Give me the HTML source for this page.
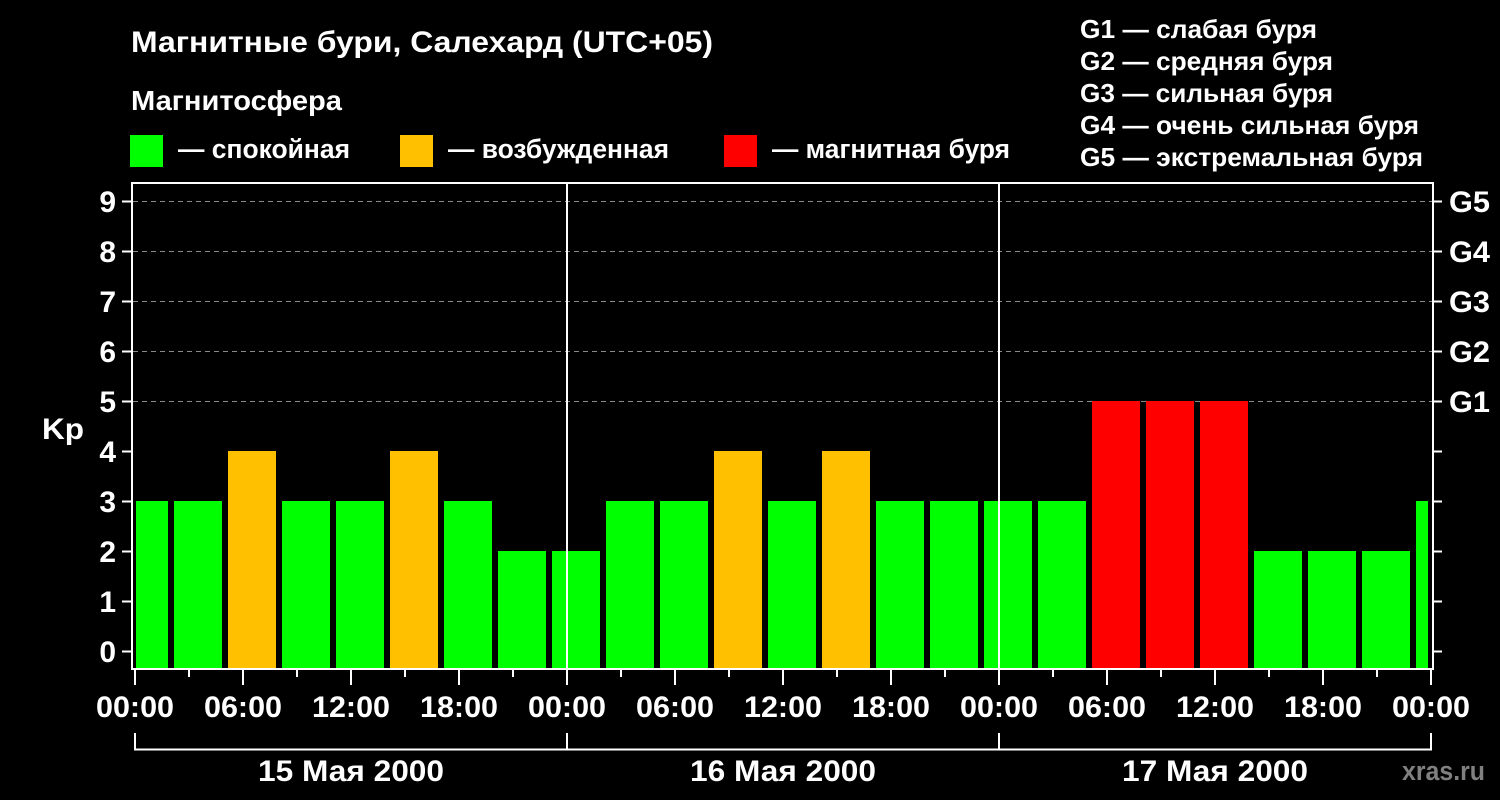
<!DOCTYPE html>
<html><head><meta charset="utf-8"><style>
html,body{margin:0;padding:0;background:#000;}
svg{display:block;}
text{font-family:"Liberation Sans",Arial,sans-serif;font-weight:bold;fill:#fff;}
</style></head><body>
<svg width="1500" height="800" viewBox="0 0 1500 800" xmlns="http://www.w3.org/2000/svg">
<rect width="1500" height="800" fill="#000"/>
<text x="131" y="52" font-size="30" textLength="582" lengthAdjust="spacingAndGlyphs">Магнитные бури, Салехард (UTC+05)</text>
<text x="131" y="110" font-size="28" textLength="211" lengthAdjust="spacingAndGlyphs">Магнитосфера</text>
<rect x="130" y="135" width="33" height="32" fill="#00ff00"/>
<text x="178" y="158" font-size="27" textLength="172" lengthAdjust="spacingAndGlyphs">— спокойная</text>
<rect x="400" y="135" width="33" height="32" fill="#ffc000"/>
<text x="448" y="158" font-size="27" textLength="221" lengthAdjust="spacingAndGlyphs">— возбужденная</text>
<rect x="724" y="135" width="33" height="32" fill="#ff0000"/>
<text x="772" y="158" font-size="27" textLength="238" lengthAdjust="spacingAndGlyphs">— магнитная буря</text>
<g font-size="26">
<text x="1080" y="38" textLength="237" lengthAdjust="spacingAndGlyphs">G1 — слабая буря</text>
<text x="1080" y="70" textLength="253" lengthAdjust="spacingAndGlyphs">G2 — средняя буря</text>
<text x="1080" y="102" textLength="253" lengthAdjust="spacingAndGlyphs">G3 — сильная буря</text>
<text x="1080" y="134" textLength="339" lengthAdjust="spacingAndGlyphs">G4 — очень сильная буря</text>
<text x="1080" y="166" textLength="343" lengthAdjust="spacingAndGlyphs">G5 — экстремальная буря</text>
</g>
<g stroke="#8a8a8a" stroke-width="1" stroke-dasharray="5,4">
<line x1="133" y1="201.5" x2="1432" y2="201.5"/>
<line x1="133" y1="251.5" x2="1432" y2="251.5"/>
<line x1="133" y1="301.5" x2="1432" y2="301.5"/>
<line x1="133" y1="351.5" x2="1432" y2="351.5"/>
<line x1="133" y1="401.5" x2="1432" y2="401.5"/>
</g>
<g>
<rect x="136" y="501" width="32" height="167" fill="#00ff00"/>
<rect x="174" y="501" width="48" height="167" fill="#00ff00"/>
<rect x="228" y="451" width="48" height="217" fill="#ffc000"/>
<rect x="282" y="501" width="48" height="167" fill="#00ff00"/>
<rect x="336" y="501" width="48" height="167" fill="#00ff00"/>
<rect x="390" y="451" width="48" height="217" fill="#ffc000"/>
<rect x="444" y="501" width="48" height="167" fill="#00ff00"/>
<rect x="498" y="551" width="48" height="117" fill="#00ff00"/>
<rect x="552" y="551" width="48" height="117" fill="#00ff00"/>
<rect x="606" y="501" width="48" height="167" fill="#00ff00"/>
<rect x="660" y="501" width="48" height="167" fill="#00ff00"/>
<rect x="714" y="451" width="48" height="217" fill="#ffc000"/>
<rect x="768" y="501" width="48" height="167" fill="#00ff00"/>
<rect x="822" y="451" width="48" height="217" fill="#ffc000"/>
<rect x="876" y="501" width="48" height="167" fill="#00ff00"/>
<rect x="930" y="501" width="48" height="167" fill="#00ff00"/>
<rect x="984" y="501" width="48" height="167" fill="#00ff00"/>
<rect x="1038" y="501" width="48" height="167" fill="#00ff00"/>
<rect x="1092" y="401" width="48" height="267" fill="#ff0000"/>
<rect x="1146" y="401" width="48" height="267" fill="#ff0000"/>
<rect x="1200" y="401" width="48" height="267" fill="#ff0000"/>
<rect x="1254" y="551" width="48" height="117" fill="#00ff00"/>
<rect x="1308" y="551" width="48" height="117" fill="#00ff00"/>
<rect x="1362" y="551" width="48" height="117" fill="#00ff00"/>
<rect x="1416" y="501" width="12" height="167" fill="#00ff00"/>
</g>
<line x1="567" y1="183" x2="567" y2="669" stroke="#fff" stroke-width="2"/>
<line x1="999" y1="183" x2="999" y2="669" stroke="#fff" stroke-width="2"/>
<rect x="132" y="183" width="1301" height="486" fill="none" stroke="#fff" stroke-width="2"/>
<g stroke="#fff" stroke-width="2">
<line x1="122" y1="201.5" x2="131" y2="201.5"/><line x1="122" y1="251.5" x2="131" y2="251.5"/>
<line x1="122" y1="301.5" x2="131" y2="301.5"/><line x1="122" y1="351.5" x2="131" y2="351.5"/>
<line x1="122" y1="401.5" x2="131" y2="401.5"/><line x1="122" y1="451.5" x2="131" y2="451.5"/>
<line x1="122" y1="501.5" x2="131" y2="501.5"/><line x1="122" y1="551.5" x2="131" y2="551.5"/>
<line x1="122" y1="601.5" x2="131" y2="601.5"/><line x1="122" y1="651.5" x2="131" y2="651.5"/>
<line x1="1434" y1="201.5" x2="1442" y2="201.5"/><line x1="1434" y1="251.5" x2="1442" y2="251.5"/>
<line x1="1434" y1="301.5" x2="1442" y2="301.5"/><line x1="1434" y1="351.5" x2="1442" y2="351.5"/>
<line x1="1434" y1="401.5" x2="1442" y2="401.5"/><line x1="1434" y1="451.5" x2="1442" y2="451.5"/>
<line x1="1434" y1="501.5" x2="1442" y2="501.5"/><line x1="1434" y1="551.5" x2="1442" y2="551.5"/>
<line x1="1434" y1="601.5" x2="1442" y2="601.5"/><line x1="1434" y1="651.5" x2="1442" y2="651.5"/>
</g>
<g font-size="30" text-anchor="end">
<text x="116" y="212">9</text><text x="116" y="262">8</text><text x="116" y="312">7</text>
<text x="116" y="362">6</text><text x="116" y="412">5</text><text x="116" y="462">4</text>
<text x="116" y="512">3</text><text x="116" y="562">2</text><text x="116" y="612">1</text>
<text x="116" y="662">0</text>
</g>
<text x="42" y="439" font-size="30" textLength="42" lengthAdjust="spacingAndGlyphs">Kp</text>
<g font-size="30">
<text x="1449" y="212" textLength="41" lengthAdjust="spacingAndGlyphs">G5</text>
<text x="1449" y="262" textLength="41" lengthAdjust="spacingAndGlyphs">G4</text>
<text x="1449" y="312" textLength="41" lengthAdjust="spacingAndGlyphs">G3</text>
<text x="1449" y="362" textLength="41" lengthAdjust="spacingAndGlyphs">G2</text>
<text x="1449" y="412" textLength="41" lengthAdjust="spacingAndGlyphs">G1</text>
</g>
<g stroke="#fff" stroke-width="2">
<line x1="135" y1="670" x2="135" y2="685"/><line x1="243" y1="670" x2="243" y2="685"/>
<line x1="351" y1="670" x2="351" y2="685"/><line x1="459" y1="670" x2="459" y2="685"/>
<line x1="567" y1="670" x2="567" y2="685"/><line x1="675" y1="670" x2="675" y2="685"/>
<line x1="783" y1="670" x2="783" y2="685"/><line x1="891" y1="670" x2="891" y2="685"/>
<line x1="999" y1="670" x2="999" y2="685"/><line x1="1107" y1="670" x2="1107" y2="685"/>
<line x1="1215" y1="670" x2="1215" y2="685"/><line x1="1323" y1="670" x2="1323" y2="685"/>
<line x1="1431" y1="670" x2="1431" y2="685"/>
<line x1="189" y1="670" x2="189" y2="677"/><line x1="297" y1="670" x2="297" y2="677"/>
<line x1="405" y1="670" x2="405" y2="677"/><line x1="513" y1="670" x2="513" y2="677"/>
<line x1="621" y1="670" x2="621" y2="677"/><line x1="729" y1="670" x2="729" y2="677"/>
<line x1="837" y1="670" x2="837" y2="677"/><line x1="945" y1="670" x2="945" y2="677"/>
<line x1="1053" y1="670" x2="1053" y2="677"/><line x1="1161" y1="670" x2="1161" y2="677"/>
<line x1="1269" y1="670" x2="1269" y2="677"/><line x1="1377" y1="670" x2="1377" y2="677"/>
</g>
<g font-size="30">
<text x="96" y="717" textLength="78" lengthAdjust="spacingAndGlyphs">00:00</text>
<text x="204" y="717" textLength="78" lengthAdjust="spacingAndGlyphs">06:00</text>
<text x="312" y="717" textLength="78" lengthAdjust="spacingAndGlyphs">12:00</text>
<text x="420" y="717" textLength="78" lengthAdjust="spacingAndGlyphs">18:00</text>
<text x="528" y="717" textLength="78" lengthAdjust="spacingAndGlyphs">00:00</text>
<text x="636" y="717" textLength="78" lengthAdjust="spacingAndGlyphs">06:00</text>
<text x="744" y="717" textLength="78" lengthAdjust="spacingAndGlyphs">12:00</text>
<text x="852" y="717" textLength="78" lengthAdjust="spacingAndGlyphs">18:00</text>
<text x="960" y="717" textLength="78" lengthAdjust="spacingAndGlyphs">00:00</text>
<text x="1068" y="717" textLength="78" lengthAdjust="spacingAndGlyphs">06:00</text>
<text x="1176" y="717" textLength="78" lengthAdjust="spacingAndGlyphs">12:00</text>
<text x="1284" y="717" textLength="78" lengthAdjust="spacingAndGlyphs">18:00</text>
<text x="1392" y="717" textLength="78" lengthAdjust="spacingAndGlyphs">00:00</text>
</g>
<g stroke="#fff" stroke-width="2" fill="none">
<polyline points="135,733 135,749.5 1431,749.5 1431,733"/>
<line x1="567" y1="733" x2="567" y2="749"/><line x1="999" y1="733" x2="999" y2="749"/>
</g>
<g font-size="30">
<text x="258" y="781" textLength="186" lengthAdjust="spacingAndGlyphs">15 Мая 2000</text>
<text x="690" y="781" textLength="186" lengthAdjust="spacingAndGlyphs">16 Мая 2000</text>
<text x="1122" y="781" textLength="186" lengthAdjust="spacingAndGlyphs">17 Мая 2000</text>
</g>
<text x="1402" y="780" font-size="27" textLength="83" lengthAdjust="spacingAndGlyphs" style="fill:#808080">xras.ru</text>
</svg>
</body></html>
